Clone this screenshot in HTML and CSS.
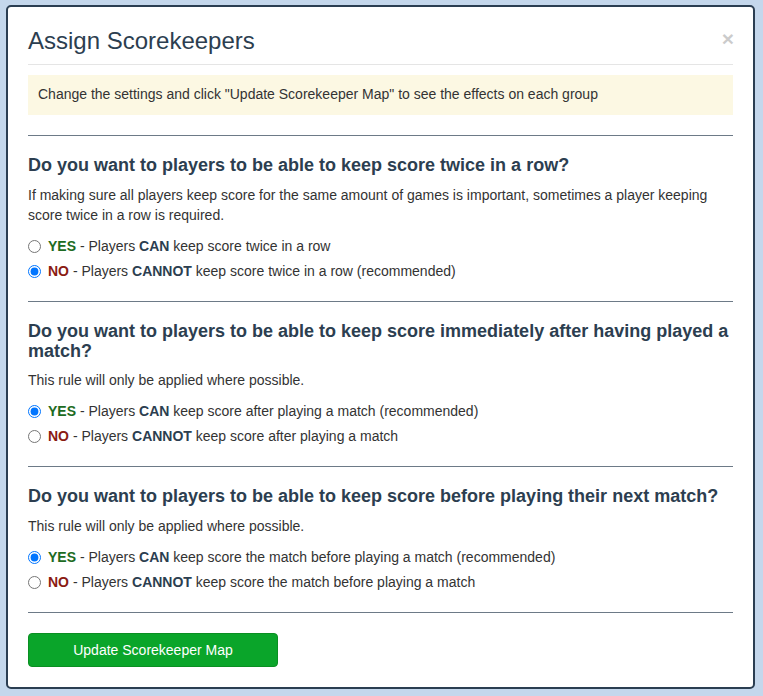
FILE: index.html
```html
<!DOCTYPE html>
<html lang="en">
<head>
<meta charset="utf-8">
<title>Assign Scorekeepers</title>
<link rel="stylesheet" href="styles.css">
</head>
<body>
<div class="modal">
  <div class="modal-header">
    <h3 class="modal-title">Assign Scorekeepers</h3>
    <button class="close" type="button" aria-label="Close">&times;</button>
  </div>
  <div class="alert">Change the settings and click "Update Scorekeeper Map" to see the effects on each group</div>
  <hr class="divider">

  <h4 class="question">Do you want to players to be able to keep score twice in a row?</h4>
  <p class="help">If making sure all players keep score for the same amount of games is important, sometimes a player keeping score twice in a row is required.</p>
  <div class="radio"><label><input type="radio" name="twice"><span class="yes">YES</span> - Players <b>CAN</b> keep score twice in a row</label></div>
  <div class="radio"><label><input type="radio" name="twice" checked><span class="no">NO</span> - Players <b>CANNOT</b> keep score twice in a row (recommended)</label></div>
  <hr class="divider">

  <h4 class="question">Do you want to players to be able to keep score immediately after having played a match?</h4>
  <p class="help">This rule will only be applied where possible.</p>
  <div class="radio"><label><input type="radio" name="after" checked><span class="yes">YES</span> - Players <b>CAN</b> keep score after playing a match (recommended)</label></div>
  <div class="radio"><label><input type="radio" name="after"><span class="no">NO</span> - Players <b>CANNOT</b> keep score after playing a match</label></div>
  <hr class="divider">

  <h4 class="question">Do you want to players to be able to keep score before playing their next match?</h4>
  <p class="help">This rule will only be applied where possible.</p>
  <div class="radio"><label><input type="radio" name="before" checked><span class="yes">YES</span> - Players <b>CAN</b> keep score the match before playing a match (recommended)</label></div>
  <div class="radio"><label><input type="radio" name="before"><span class="no">NO</span> - Players <b>CANNOT</b> keep score the match before playing a match</label></div>
  <hr class="divider">

  <button class="btn-update" type="button">Update Scorekeeper Map</button>
</div>
</body>
</html>
```
FILE: styles.css
```css
html, body {
  height: 100%;
}
body {
  margin: 0;
  padding: 5px 8px 0 6px;
  box-sizing: border-box;
  background: #c4d7ec;
  font-family: "Liberation Sans", Arial, Helvetica, sans-serif;
  font-size: 14px;
  line-height: 1.42857;
  color: #333;
}
.modal {
  width: 749px;
  box-sizing: border-box;
  background: #fff;
  border: 2px solid #2b3e52;
  border-radius: 5px;
  padding: 0 20px 20px;
}
.modal-header {
  display: flex;
  align-items: flex-start;
  justify-content: space-between;
  padding: 17px 0 6px;
  border-bottom: 1px solid #e5e5e5;
}
.modal-title {
  margin: 0;
  font-size: 24px;
  font-weight: normal;
  line-height: 34px;
  color: #2c3e50;
}
.close {
  margin: 4px -1px 0 0;
  padding: 0;
  border: 0;
  background: transparent;
  font-family: "Liberation Sans", Arial, sans-serif;
  font-size: 21px;
  font-weight: bold;
  line-height: 1;
  color: #000;
  opacity: 0.2;
  cursor: pointer;
}
.alert {
  margin-top: 10px;
  padding: 10px;
  background: #fcf8e3;
  color: #333;
}
.divider {
  margin: 20px 0;
  border: 0;
  border-top: 1px solid #6d7a87;
}
.question {
  margin: 10px 0;
  font-size: 18px;
  font-weight: bold;
  line-height: 1.1;
  color: #2c3e50;
}
.help {
  margin: 0 0 10px;
}
.radio {
  margin: 10px 0;
  min-height: 20px;
}
.radio + .radio {
  margin-top: -5px;
}
.radio label {
  display: block;
  position: relative;
  padding-left: 20px;
  line-height: 20px;
  cursor: pointer;
}
.radio input {
  position: absolute;
  left: 0;
  top: 0;
  margin: 4px 0 0;
  width: 13px;
  height: 13px;
}
.radio b {
  color: #2c3e50;
}
.yes {
  font-weight: bold;
  color: #1d6b22;
}
.no {
  font-weight: bold;
  color: #8a1b12;
}
.btn-update {
  display: block;
  width: 250px;
  height: 34px;
  padding: 6px 12px;
  border: 1px solid #0a8f22;
  border-radius: 4px;
  background: #0aa52a;
  color: #fff;
  font-family: "Liberation Sans", Arial, sans-serif;
  font-size: 14px;
  line-height: 20px;
  text-align: center;
  cursor: pointer;
}
```
